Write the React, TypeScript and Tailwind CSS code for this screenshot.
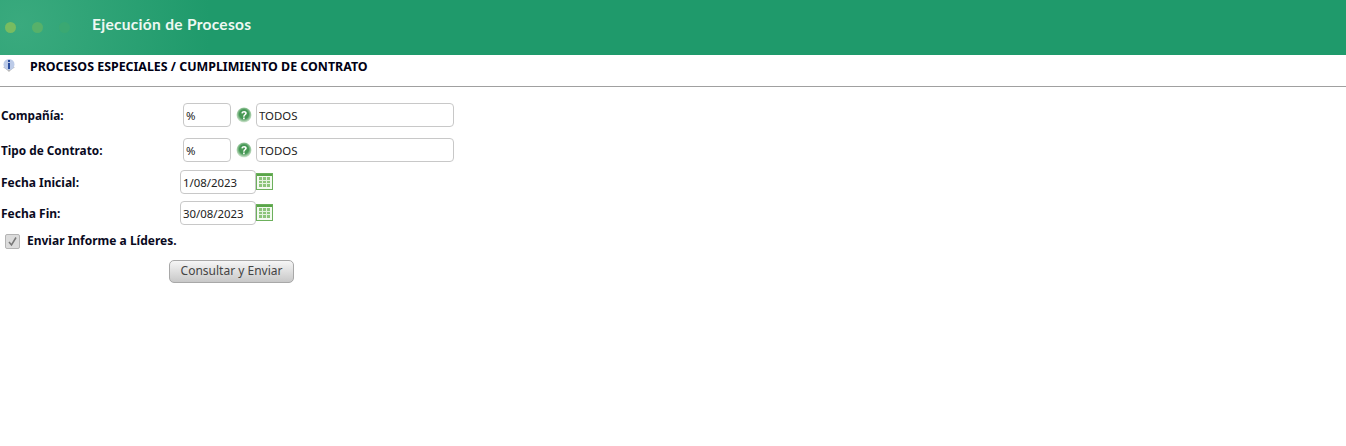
import React from 'react'

const font = "[font-family:'Noto_Sans','DejaVu_Sans',sans-serif]"

function HelpIcon() {
  return (
    <svg width="16" height="16" viewBox="0 0 16 16">
      <defs>
        <radialGradient id="help" cx="50%" cy="45%" r="55%">
          <stop offset="0%" stopColor="#4f9a55" />
          <stop offset="55%" stopColor="#459855" />
          <stop offset="80%" stopColor="#9cc8a0" />
          <stop offset="100%" stopColor="#dcebdc" />
        </radialGradient>
      </defs>
      <circle cx="8" cy="8" r="7.500" fill="url(#help)" />
      <path d="M5.300 6.300c.3-1.600 1.500-2.300 2.800-2.300 1.500 0 2.700.9 2.700 2.200 0 1.800-2.200 1.800-2.300 3.500H7.100c0-2.300 2-2.400 2-3.500 0-.5-.4-.8-1-.8-.6 0-1.100.3-1.300 1.100z" fill="#fff" />
      <rect x="7.100" y="10.500" width="1.600" height="1.700" fill="#fff" />
    </svg>
  )
}

function CalendarIcon() {
  return (
    <svg width="17" height="17" viewBox="0 0 17 17">
      <rect x="0.500" y="0.500" width="16" height="16" fill="#f4faf1" stroke="#6cb05c" />
      <rect x="1" y="1" width="15" height="2" fill="#5aa549" />
      <rect x="3" y="4" width="11" height="10" fill="#8cc47a" />
      <path d="M6.500 4v10M10.500 4v10M3 7.500h11M3 10.500h11" stroke="#e4f2df" strokeWidth="1" />
    </svg>
  )
}

function InfoIcon() {
  return (
    <svg width="14" height="15" viewBox="0 0 14 15">
      <path d="M1 8c2 2 4 2.500 6 5 2-2.500 4-3 6-5z" fill="#b8b8b8" />
      <circle cx="7" cy="5.500" r="5.500" fill="#bccbe8" />
      <rect x="6" y="1" width="2" height="2" fill="#2c4f9e" />
      <rect x="6" y="4" width="2" height="6" fill="#2c4f9e" />
    </svg>
  )
}

function LookupRow({ label }: { label: string }) {
  return (
    <div className="flex items-center h-6">
      <label className="w-[183px] pl-[1px] mt-[1px] text-[11.800px] font-bold text-[#0a0a1e]">{label}</label>
      <input
        readOnly
        value="%"
        className="w-[48px] h-6 px-[2px] border border-[#c8c8c8] rounded-[4px] text-[11.400px] text-[#222]"
      />
      <span className="ml-[5px] mr-[4px] -mt-[1px] flex"><HelpIcon /></span>
      <input
        readOnly
        value="TODOS"
        className="w-[198px] h-6 px-[2px] border border-[#c8c8c8] rounded-[4px] text-[11.400px] text-[#222]"
      />
    </div>
  )
}

function DateRow({ label, value }: { label: string; value: string }) {
  return (
    <div className="flex items-center h-6">
      <label className="w-[180px] pl-[1px] mt-[1px] text-[12px] font-bold text-[#0a0a1e]">{label}</label>
      <input
        readOnly
        value={value}
        className="w-[76px] h-6 px-[2px] border border-[#c8c8c8] rounded-[4px] text-[11.400px] text-[#222]"
      />
      <span className="-mt-[2px] flex"><CalendarIcon /></span>
    </div>
  )
}

export default function App() {
  return (
    <div className={`w-[1346px] h-[446px] bg-white overflow-hidden ${font}`}>
      <header className="h-[55px] flex items-center bg-[radial-gradient(circle_at_20px_25px,#3aaa7e_0%,#1f9a6b_190px)]">
        <div className="flex items-center gap-[16px] pl-[5px] w-[92px]">
          <span className="w-[11px] h-[11px] rounded-full bg-[#78bc60]" />
          <span className="w-[11px] h-[11px] rounded-full bg-[#57b16a]" />
          <span className="w-[11px] h-[11px] rounded-full bg-[#3aa872]" />
        </div>
        <h1 className="text-[15.500px] font-bold text-[#eef8f2] tracking-[0.3px] [font-family:'Lato',sans-serif] -mt-[5px]">
          Ejecución de Procesos
        </h1>
      </header>

      <div className="h-[31px] border-b border-[#a0a0a0] flex items-start pl-[2px] box-content">
        <span className="mt-[4px] flex"><InfoIcon /></span>
        <span className="ml-[14px] mt-[3px] text-[12.400px] font-bold text-[#000014] leading-[18px]">
          PROCESOS ESPECIALES / CUMPLIMIENTO DE CONTRATO
        </span>
      </div>

      <form className="flex flex-col pt-[16px]">
        <LookupRow label="Compañía:" />
        <div className="h-[11px]" />
        <LookupRow label="Tipo de Contrato:" />
        <div className="h-[8px]" />
        <DateRow label="Fecha Inicial:" value="1/08/2023" />
        <div className="h-[7px]" />
        <DateRow label="Fecha Fin:" value="30/08/2023" />
        <div className="flex items-center mt-[8px] pl-[5px] h-4">
          <span className="w-[15px] h-[15px] flex items-center justify-center bg-[#dcdcdc] border border-[#b4b4b4] rounded-[2px]">
            <svg width="11" height="11" viewBox="0 0 11 11">
              <path d="M2 6l2.500 3L9 1.500" fill="none" stroke="#777" strokeWidth="1.500" />
            </svg>
          </span>
          <span className="ml-[7px] text-[12px] font-bold text-[#0a0a1e] -mt-[1px]">Enviar Informe a Líderes.</span>
        </div>
        <div className="pl-[169px] mt-[8px]">
          <button
            type="button"
            className="w-[125px] h-[23px] rounded-[5px] border border-[#a8a8a8] bg-gradient-to-b from-[#f6f6f6] to-[#c8c8c8] text-[12px] text-[#444]"
          >
            Consultar y Enviar
          </button>
        </div>
      </form>
    </div>
  )
}
